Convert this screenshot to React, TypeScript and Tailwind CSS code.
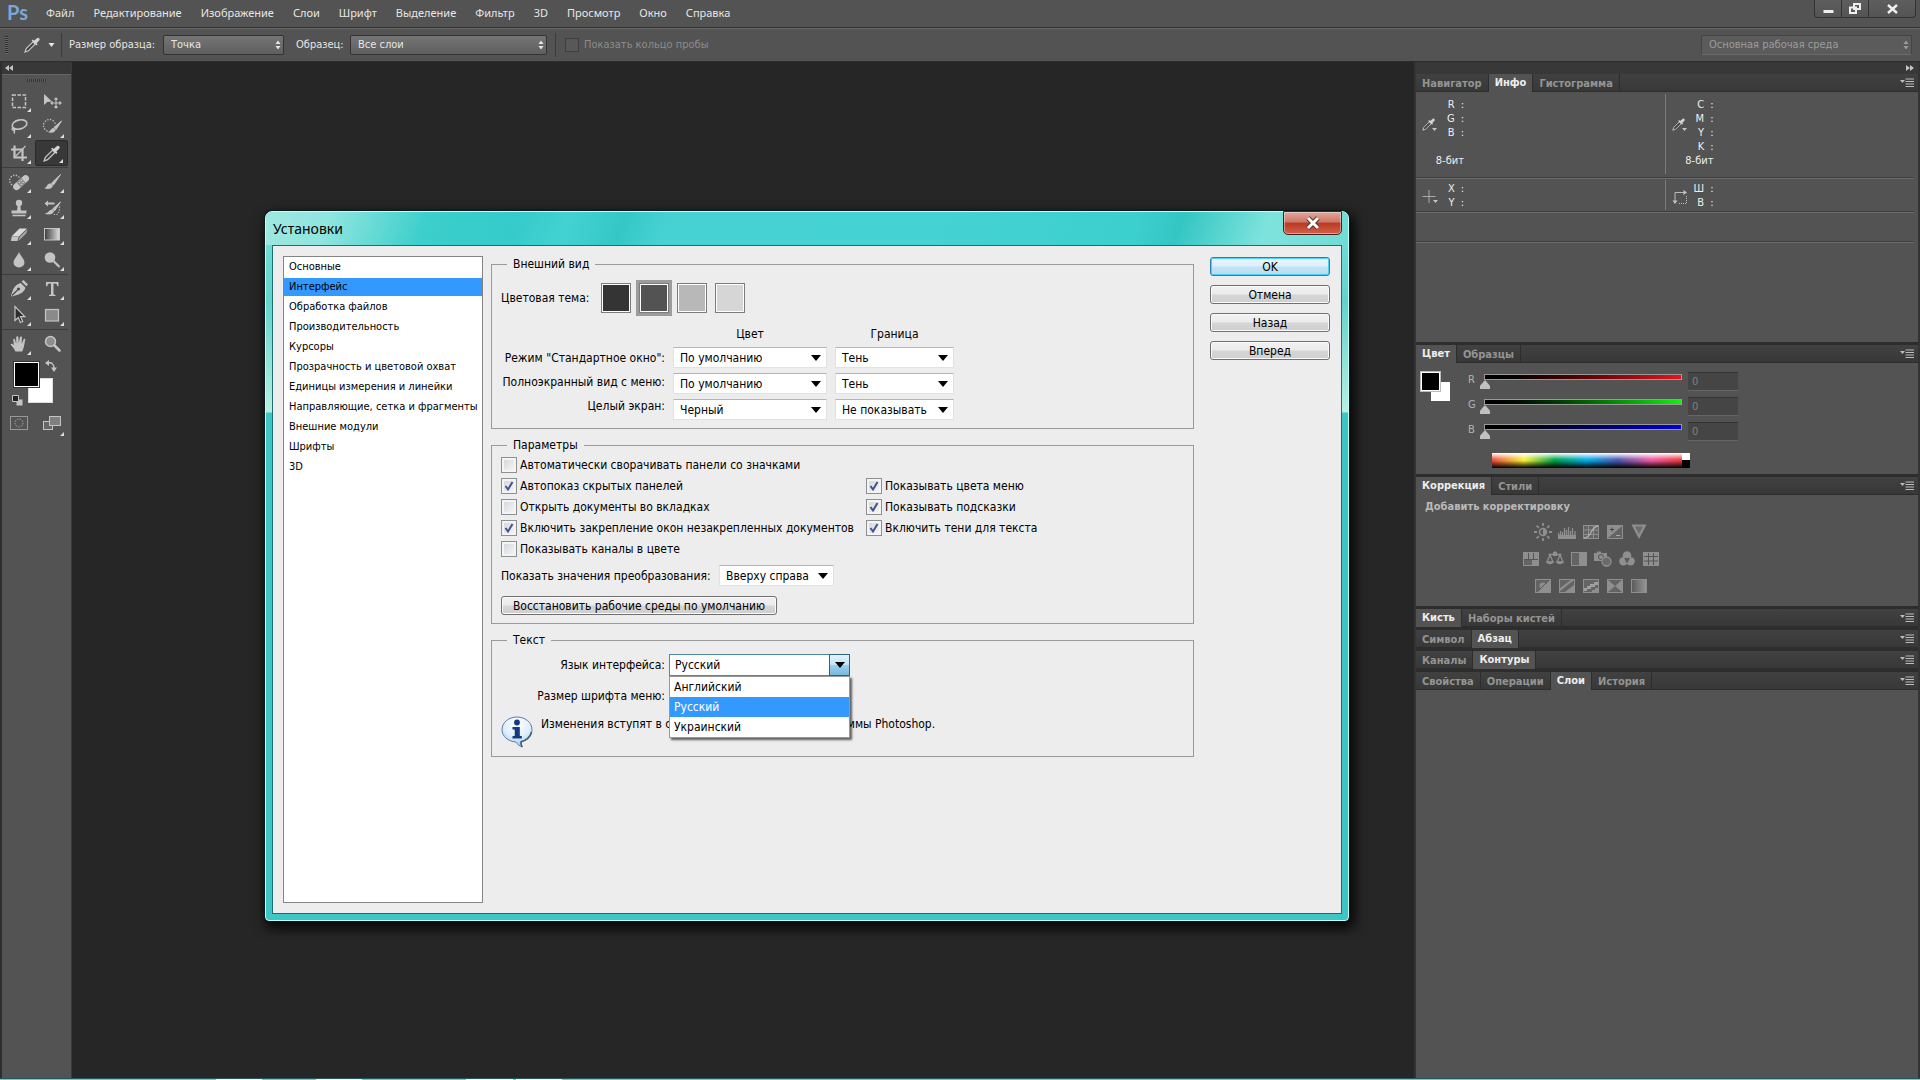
import React, { ReactNode } from 'react';

const MENU = ['Файл', 'Редактирование', 'Изображение', 'Слои', 'Шрифт', 'Выделение', 'Фильтр', '3D', 'Просмотр', 'Окно', 'Справка'];

const SECTIONS = [
  'Основные',
  'Интерфейс',
  'Обработка файлов',
  'Производительность',
  'Курсоры',
  'Прозрачность и цветовой охват',
  'Единицы измерения и линейки',
  'Направляющие, сетка и фрагменты',
  'Внешние модули',
  'Шрифты',
  '3D',
];

/* ---------- icons ---------- */

function Svg({ w = 20, h = 20, className, children }: { w?: number; h?: number; className?: string; children: ReactNode }) {
  return (
    <svg width={w} height={h} viewBox={`0 0 ${w} ${h}`} className={className} fill="none" stroke="none" aria-hidden="true">
      {children}
    </svg>
  );
}

const G = '#c4c4c4';

function Eyedropper({ size = 16 }: { size?: number }) {
  return (
    <svg width={size} height={size} viewBox="0 0 16 16" fill="none" aria-hidden="true">
      <path d="M9 4.8 2.2 11.6 1 15l3.4-1.2L11.2 7z" fill="#3f3f3f" stroke={G} strokeWidth="1.2" />
      <path d="m7.6 3.6 4.8 4.8 1.2-1.2-1-1 2.4-2.4c1-1 .8-1.9.2-2.6s-1.7-.8-2.6.2L10 3.8 8.9 2.6z" fill="#d4d4d4" />
    </svg>
  );
}

function BrushShape() {
  return (
    <>
      <path d="M18.5 2.5 9.5 11.2l1.9 1.9z" fill={G} stroke={G} strokeWidth="1" />
      <path d="M8.8 11.5c-2.2-.3-3.2.8-3.8 2.2-.5 1.2-1.4 2-3 2.3 3 1.7 8.2 1.3 9-2.5z" fill={G} />
    </>
  );
}

const TOOLS: { name: string; icon: ReactNode; plain?: boolean }[][] = [
  [
    { name: 'Прямоугольная область', icon: <Svg><rect x="3.5" y="4" width="13" height="12.5" stroke={G} strokeWidth="1.5" strokeDasharray="3.5 1.5" /></Svg> },
    {
      name: 'Перемещение',
      plain: true,
      icon: <Svg><path d="M2 3v11l3.2-3L10 10.5z" fill={G} /><path d="M14 7.5v9M9.5 12h9M12.5 8.5 14 7l1.5 1.5M12.5 15.5 14 17l1.5-1.5M10.5 10.5 9 12l1.5 1.5M17.5 10.5 19 12l-1.5 1.5" stroke={G} strokeWidth="1.1" /></Svg>,
    },
    { name: 'Лассо', icon: <Svg><ellipse cx="10.5" cy="7.5" rx="7.5" ry="4.5" transform="rotate(-14 10.5 7.5)" stroke={G} strokeWidth="1.6" /><path d="M4.5 10.5c-2 .5-2 3 .3 2.8 2-.2 1-2.3-.5-2 1 1.5 2.5 3 .5 5.2" stroke={G} strokeWidth="1.2" /></Svg> },
    { name: 'Быстрое выделение', icon: <Svg><circle cx="7.5" cy="8.5" r="6" stroke={G} strokeWidth="1.3" strokeDasharray="1.3 1.5" /><path d="M7 13h6l5-8" stroke="#535353" strokeWidth="5" /><path d="M19.5 4 12 10.5l2 2z" fill={G} stroke={G} /><path d="M11.5 11c-2.5 0-2.5 3.5-6 4 3 1.5 8 1 8-2.2z" fill={G} /></Svg> },
    { name: 'Рамка', icon: <Svg><path d="M5.5 2.5v12h12.5M2 6.5h11.5V18" stroke={G} strokeWidth="2.2" /><path d="m6.5 13.5 10-10.5" stroke={G} strokeWidth="1.1" /></Svg> },
    { name: 'Пипетка', icon: <Eyedropper size={17} /> },
  ],
  [
    { name: 'Восстанавливающая кисть', icon: <Svg><circle cx="6" cy="8.5" r="5.3" stroke={G} strokeWidth="1.3" strokeDasharray="1.3 1.5" /><g transform="rotate(-42 12 10.5)"><rect x="2.5" y="7.2" width="19" height="6.8" rx="3.4" fill={G} /><rect x="8.7" y="7.2" width="6.6" height="6.8" fill="#8a8a8a" /><path d="M10.5 9.2h1M13 9.2h1M10.5 12h1M13 12h1" stroke="#eee" /></g></Svg> },
    { name: 'Кисть', icon: <Svg><BrushShape /></Svg> },
    { name: 'Штамп', icon: <Svg><circle cx="10" cy="5" r="3.2" fill={G} /><path d="M8.8 7h2.4l.8 5.5h5.5v3h-15v-3H8z" fill={G} /><path d="M3.5 17.5h13" stroke={G} strokeWidth="1.6" /></Svg> },
    { name: 'Архивная кисть', icon: <Svg><path d="M2.5 5.5 6 2.5v2h6.5v2H6v2z" fill={G} /><path d="M18.5 4 10.5 11l2 2z" fill={G} stroke={G} /><path d="M10 11.5c-3 0-3 3.5-7.5 4 3 1.7 9 1.3 9.5-2.5z" fill={G} /><path d="M17.5 8.5v4.5l-2.5 3.5h-4" stroke={G} strokeWidth="1.2" strokeDasharray="1.2 1.5" /></Svg> },
    { name: 'Ластик', icon: <Svg><path d="m2.5 12.5 8-8h7.5l-8 8z" fill="#dadada" /><path d="M2.5 12.8h7.2L8.5 17H2z" fill={G} /><path d="m10.8 12.8 7.7-7.5-1.2 4L9.5 17z" fill="#aaa" /></Svg> },
    {
      name: 'Градиент',
      icon: (
        <Svg>
          <defs><linearGradient id="tool-gradient"><stop stopColor="#3c3c3c" /><stop offset="1" stopColor="#e0e0e0" /></linearGradient></defs>
          <rect x="2.5" y="4.5" width="15" height="11.5" fill="url(#tool-gradient)" stroke={G} />
        </Svg>
      ),
    },
    { name: 'Размытие', icon: <Svg><path d="M10 2c1 3.5 5.5 7 5.5 10.5a5.5 5 0 0 1-11 0C4.5 9 9 5.5 10 2z" fill={G} /></Svg> },
    { name: 'Осветлитель', icon: <Svg><circle cx="8" cy="7.5" r="5.3" fill={G} /><path d="m11.5 11 6 6" stroke={G} strokeWidth="2.2" /></Svg> },
  ],
  [
    { name: 'Перо', icon: <Svg><path d="m12.5 2.5 2-1.5 4.5 4.5-1.7 1.8z" fill={G} /><path d="m11.8 4 4.7 4.7c-1.5 4-4 6-9.5 7.5l-4 1.3-1-1 1.5-4C5 7.5 7.5 5.5 11.8 4z" fill={G} /><path d="m3 16.5 5.5-5.5" stroke="#444" strokeWidth="1.1" /><circle cx="9.5" cy="10" r="1.5" fill="#444" /></Svg> },
    { name: 'Текст', icon: <Svg><path d="M4 3h12.5v4.2h-1.2c-.3-2-1.1-2.7-2.8-2.7h-1v10c0 1 .5 1.3 2 1.5v1H7v-1c1.500-.2 2-.5 2-1.500v-10H8c-1.700 0-2.500.7-2.800 2.700H4z" fill={G} /></Svg> },
    { name: 'Выделение контура', icon: <Svg><path d="M6 1.5v14l3.2-3 2.2 5 2.3-1-2.2-4.8h4.3z" fill="#2c2c2c" stroke={G} strokeWidth="1.2" /></Svg> },
    { name: 'Прямоугольник', icon: <Svg><rect x="3.5" y="4.5" width="13" height="11.5" fill="#8a8a8a" stroke={G} strokeWidth="1.2" /></Svg> },
  ],
  [
    { name: 'Рука', icon: <Svg><path d="M6.5 17.5 4.5 14 1.5 10.5c.8-1.2 2-1 3.3.7L4.2 5c1.2-.8 1.7 0 2 1.2l1 3.5V3c.8-1 1.8-1 2.2 0l.4 6.3L11 3c.8-.8 1.8-.6 2 .4l-.3 6.5 2-5c.9-.5 1.7 0 1.5 1.1l-1.5 7.500-1.500 4z" fill={G} /></Svg> },
    { name: 'Масштаб', plain: true, icon: <Svg><circle cx="8.5" cy="7.5" r="5" fill="#8e8e8e" stroke={G} strokeWidth="1.5" /><path d="m12.5 11.5 5 5" stroke={G} strokeWidth="2.6" strokeLinecap="round" /></Svg> },
  ],
];

function Spin() {
  return (
    <svg width="6" height="9" viewBox="0 0 6 9" fill="currentColor" className="pointer-events-none absolute top-1/2 right-[3px] -translate-y-1/2" aria-hidden="true">
      <path d="M3 0 .5 3.5h5zM3 9 .5 5.5h5z" />
    </svg>
  );
}

/* ---------- top bars ---------- */

function BarSelect({ id, value, className }: { id: string; value: string; className: string }) {
  return (
    <span className={'relative flex h-5 ' + className}>
      <select id={id} className="w-full appearance-none rounded-xs border border-[#333] bg-linear-to-b from-[#757575] to-[#5f5f5f] px-[7px] outline-none">
        <option>{value}</option>
      </select>
      <Spin />
    </span>
  );
}

function WindowButtons() {
  return (
    <div className="mr-1 flex h-[18px] overflow-hidden rounded-b-sm border border-t-0 border-[#333] bg-linear-to-b from-[#5e5e5e] to-[#545454] text-[#eee]">
      <button aria-label="Свернуть" className="flex w-[27px] items-center justify-center border-r border-[#333]">
        <Svg w={11} h={10}><path d="M.5 6h10v3H.5z" fill="currentColor" /></Svg>
      </button>
      <button aria-label="Восстановить" className="flex w-[27px] items-center justify-center border-r border-[#333]">
        <Svg w={12} h={11}><path d="M5 1h6v5H5zM1 4.5h6V10H1z" stroke="currentColor" strokeWidth="2" fill="#5a5a5a" /></Svg>
      </button>
      <button aria-label="Закрыть" className="flex w-[46px] items-center justify-center">
        <Svg w={11} h={10}><path d="m1 1 9 8m0-8L1 9" stroke="currentColor" strokeWidth="2.4" /></Svg>
      </button>
    </div>
  );
}

function TopBars() {
  return (
    <header className="text-[#e6e6e6]">
      <div className="flex h-7 items-start border-b border-[#333]">
        <span className="ml-[7px] w-8 font-['Lato',sans-serif] text-[20px] leading-6 font-bold text-[#7ba7d6]">Ps</span>
        <nav className="flex grow gap-[19px] pt-[5px] pl-[7px] font-['Noto_Sans',sans-serif] leading-4">
          {MENU.map((m) => (
            <button key={m}>{m}</button>
          ))}
        </nav>
        <WindowButtons />
      </div>
      <div className="flex h-[33px] items-center border-t border-[#666] pr-2">
        <span className="ml-[5px] h-[18px] w-[3px] bg-[repeating-linear-gradient(#2e2e2e_0_1px,#666_1px_2px)]" />
        <button aria-label="Пипетка" className="ml-4 flex items-center gap-2">
          <Eyedropper />
          <Svg w={7} h={4}><path d="M.5 0h6L3.500 4z" fill="currentColor" /></Svg>
        </button>
        <span className="ml-[6px] h-6 w-px bg-[#3a3a3a]" />
        <label htmlFor="sample-size" className="ml-[7px] w-[94px]">Размер образца:</label>
        <BarSelect id="sample-size" value="Точка" className="w-[121px]" />
        <label htmlFor="sample" className="ml-3 w-[54px]">Образец:</label>
        <BarSelect id="sample" value="Все слои" className="w-[197px]" />
        <span className="ml-2 h-6 w-px bg-[#3a3a3a]" />
        <label className="ml-[9px] flex items-center gap-[5px] text-[#8c8c8c]">
          <input type="checkbox" className="size-[14px] appearance-none border border-[#3e3e3e] bg-[#585858]" />
          Показать кольцо пробы
        </label>
        <span className="grow" />
        <span className="relative flex h-5 w-[211px] text-[#9c9c9c]">
          <select aria-label="Рабочая среда" className="w-full appearance-none rounded-xs border border-[#444] border-b-[#6a6a6a] bg-[#5b5b5b] px-[7px] outline-none">
            <option>Основная рабочая среда</option>
          </select>
          <Spin />
        </span>
      </div>
    </header>
  );
}

/* ---------- toolbox ---------- */

function Toolbox() {
  return (
    <aside className="flex w-[72px] shrink-0 flex-col border-r border-l-2 border-r-[#3a3a3a] border-l-[#2e2e2e] bg-[#535353]">
      <div className="flex h-3 items-center bg-[#383838] pl-[3px]">
        <Svg w={8} h={6}><path d="M4 0v6L0 3zM8 0v6L4 3z" fill={G} /></Svg>
      </div>
      <div className="flex h-[14px] items-start justify-center border-t border-[#666] pt-1">
        <span className="h-[3px] w-5 bg-[repeating-linear-gradient(90deg,#333_0_1px,#5c5c5c_1px_2px)]" />
      </div>
      {TOOLS.map((group, i) => (
        <div key={i} className={i ? 'mr-[3px] mt-px grid grid-cols-2 border-t border-[#3c3c3c] pt-px' : 'mr-[3px] grid grid-cols-2'}>
          {group.map((t) => (
            <button
              key={t.name}
              aria-label={t.name}
              className={
                'relative flex h-[26px] items-center justify-center ' +
                (t.name === 'Пипетка' ? 'rounded-xs border border-[#2a2a2a] bg-[#383838]' : '')
              }
            >
              {t.icon}
              {!t.plain && (
                <Svg w={4} h={4} className="absolute right-1 bottom-[2px]"><path d="M4 0v4H0z" fill="#ddd" /></Svg>
              )}
            </button>
          ))}
        </div>
      ))}
      <div className="relative mx-[10px] mt-[3px] h-[46px]">
        <button aria-label="Цвет фона" className="absolute top-[18px] left-4 size-[25px] border border-[#ddd] bg-white" />
        <button aria-label="Основной цвет" className="absolute top-[2px] left-[2px] size-[25px] border border-white bg-black outline outline-[#333]" />
        <Svg w={12} h={12} className="absolute top-0 left-[33px]"><path d="M3 3c4-1 6 1 6 6" stroke={G} strokeWidth="1.3" /><path d="M4 0v6L0 3zM6 7.5h6L9 12z" fill={G} /></Svg>
        <Svg w={11} h={11} className="absolute top-[35px] left-0"><path d="M4.5 4.5h6v6h-6z" fill={G} /><path d="M.5.5h6v6h-6z" fill="#222" stroke={G} /></Svg>
      </div>
      <div className="mr-[3px] mt-1 grid grid-cols-2">
        <button aria-label="Быстрая маска" className="flex h-[26px] items-center justify-center">
          <Svg w={18} h={14}><rect x=".5" y=".5" width="17" height="13" stroke="#999" /><circle cx="9" cy="7" r="4" stroke="#aaa" strokeDasharray="1.5 1.2" /></Svg>
        </button>
        <button aria-label="Режим экрана" className="relative flex h-[26px] items-center justify-center">
          <Svg w={18} h={14}><rect x=".5" y="5.5" width="9" height="8" stroke={G} fill="#666" /><rect x="6.5" y=".5" width="11" height="9" stroke={G} fill="#808080" /></Svg>
          <Svg w={4} h={4} className="absolute right-1 bottom-0"><path d="M4 0v4H0z" fill="#ddd" /></Svg>
        </button>
      </div>
    </aside>
  );
}

/* ---------- right dock ---------- */

function Tabs({ names, active }: { names: string[]; active: string }) {
  return (
    <div className="flex h-[18px] border-b border-[#2d2d2d] bg-linear-to-b from-[#414141] to-[#383838] font-bold" role="tablist">
      {names.map((n) => (
        <button
          key={n}
          role="tab"
          aria-selected={n === active}
          className={
            n === active
              ? 'z-1 -mb-px border-r border-[#2d2d2d] bg-[#535353] px-[6px] pt-px text-[#ededed]'
              : 'border-r border-[#2d2d2d] px-[6px] pt-[2px] text-[#949494]'
          }
        >
          {n}
        </button>
      ))}
      <button aria-label="Меню панели" className="mr-1 ml-auto text-[#bdbdbd]">
        <Svg w={14} h={9}><path d="M0 2h5L2.5 5z" fill="currentColor" /><path d="M5.5 1H14M5.5 3.5H14M5.5 6H14M5.5 8.5H14" stroke="currentColor" /></Svg>
      </button>
    </div>
  );
}

function Readout({ icon, lines, note }: { icon: ReactNode; lines: string[]; note?: boolean }) {
  return (
    <div className="flex grow basis-0 gap-[2px] pl-[6px] leading-[14px] text-[#eee]">
      <span className="flex w-4 items-center">{icon}</span>
      <div className="flex w-6 flex-col items-end">
        {lines.map((l) => (
          <span key={l} className="flex h-[14px] gap-[6px] whitespace-pre">
            <span>{l}</span>
            {l !== ' ' && <span>:</span>}
          </span>
        ))}
        {note && <span className="whitespace-nowrap">8-бит</span>}
      </div>
    </div>
  );
}

function DropperMenu() {
  return (
    <span className="relative mb-7">
      <Eyedropper size={13} />
      <Svg w={5} h={3} className="absolute -right-[2px] bottom-0"><path d="M0 0h5L2.5 3z" fill={G} /></Svg>
    </span>
  );
}

function InfoPanel() {
  return (
    <section className="h-[250px]">
      <div className="mr-1 flex h-[87px] items-stretch border-b border-[#6c6c6c] pt-1.5 shadow-[inset_0_-1px_#3e3e3e]">
        <Readout icon={<DropperMenu />} lines={['R', 'G', 'B', ' ']} note />
        <span className="-mt-1 mb-1 w-px bg-[#7a7a7a]" />
        <Readout icon={<DropperMenu />} lines={['C', 'M', 'Y', 'K']} note />
      </div>
      <div className="mr-1 flex h-[34px] border-b border-[#6c6c6c] pt-[3px] shadow-[inset_0_-1px_#3e3e3e]">
        <Readout icon={<Svg w={16} h={16}><path d="M7 1v13M.5 7.5h13" stroke="#aaa" /><path d="M11 11h5l-2.5 3z" fill={G} /></Svg>} lines={['X', 'Y']} />
        <span className="-mt-[2px] mb-[2px] w-px bg-[#7a7a7a]" />
        <Readout icon={<Svg w={16} h={16}><path d="M3 12V3.5h9" stroke="#bbb" /><path d="M.5 11.5h5L3 15zM11.5 1v5L15 3.5z" fill={G} /><path d="M7 14.5h7.5V7" stroke="#bbb" strokeDasharray="1 1" /></Svg>} lines={['Ш', 'В']} />
      </div>
      <div className="mr-1 h-[30px] border-b border-[#6c6c6c] shadow-[inset_0_-1px_#3e3e3e]" />
    </section>
  );
}

const CHANNELS = [
  { name: 'R', bar: 'bg-linear-to-r from-black to-[#e8141c]' },
  { name: 'G', bar: 'bg-linear-to-r from-black to-[#14f014]' },
  { name: 'B', bar: 'bg-linear-to-r from-black to-[#0000d8]' },
];

function ColorPanel() {
  return (
    <section className="flex h-[111px] pt-2 pl-1">
      <div className="relative h-8 w-12">
        <button aria-label="Цвет фона" className="absolute top-[11px] left-[11px] size-[19px] bg-white" />
        <button aria-label="Основной цвет" className="absolute top-0 left-0 size-[21px] border border-[#bbb] bg-black outline -outline-offset-2 outline-white" />
      </div>
      <div className="w-[270px] text-[#b4b4b4]">
        {CHANNELS.map((c) => (
          <div key={c.name} className="flex h-[25px] items-start">
            <label htmlFor={'channel-' + c.name} className="mt-px w-4 leading-4">{c.name}</label>
            <div className="mt-[3px] w-[198px]">
              <div className={'h-[6px] border border-[#999] ' + c.bar} />
              <input
                id={'channel-' + c.name}
                type="range"
                min="0"
                max="255"
                defaultValue="0"
                className="-ml-1 block h-[9px] w-[206px] appearance-none bg-transparent [&::-webkit-slider-thumb]:h-[9px] [&::-webkit-slider-thumb]:w-[10px] [&::-webkit-slider-thumb]:appearance-none [&::-webkit-slider-thumb]:bg-[#c0c0c0] [&::-webkit-slider-thumb]:[clip-path:polygon(50%_0,100%_65%,100%_100%,0_100%,0_65%)]"
              />
            </div>
            <input aria-label={'Значение ' + c.name} defaultValue="0" className="mt-px ml-[6px] h-[19px] w-[50px] border-t border-b border-t-[#333] border-b-[#666] bg-[#454545] px-1 text-[#808080] outline-none" />
          </div>
        ))}
        <div className="mt-[7px] ml-6 flex h-[15px] w-[198px]">
          <div className="grow bg-[linear-gradient(#fff,#fff0_45%,#0000_50%,#000),linear-gradient(90deg,#ee4b3c,#f7f236_17%,#00a24a_33%,#00aeef_50%,#4b58b0_66%,#f05aa0_84%,#ee3a38)]" />
          <div className="w-2 bg-[linear-gradient(#fff_50%,#000_50%)]" />
        </div>
      </div>
    </section>
  );
}

const A = '#8f8f8f';
const Frame = ({ children }: { children?: ReactNode }) => (
  <Svg w={16} h={14}>
    <rect x=".5" y=".5" width="15" height="13" fill="#646464" stroke={A} />
    {children}
  </Svg>
);

const ADJUSTMENTS: ReactNode[][] = [
  [
    <Svg w={18} h={18}><circle cx="9" cy="9" r="3.5" stroke={A} strokeWidth="1.5" /><path d="M9 5.5a3.5 3.5 0 0 1 0 7z" fill={A} /><path d="M9 0v3M9 15v3M0 9h3M15 9h3M2.6 2.6l2.2 2.2M13.2 13.2l2.2 2.2M2.6 15.4l2.2-2.2M13.2 4.8l2.2-2.2" stroke={A} strokeWidth="1.8" /></Svg>,
    <Svg w={18} h={14}><path d="M.5 13V8M2.5 13V6M4.5 13V7M6.5 13V3M8.5 13V5M10.5 13V2M12.5 13V6M14.5 13V3M17 13V6" stroke={A} strokeWidth="1.3" /><path d="M0 10h18v4H0z" fill={A} /></Svg>,
    <Frame><path d="M1 5h14M1 9.5h14M5.5 1v12M10.5 1v12" stroke={A} /><path d="M1 13c8 0 6-11 14-12" stroke="#b0b0b0" strokeWidth="1.3" /></Frame>,
    <Frame><path d="M1 13V1h14z" fill={A} /><path d="M3 4.5h4M5 2.5v4" stroke="#444" /><path d="M9 10.5h4" stroke="#aaa" /></Frame>,
    <Svg w={16} h={16}><path d="M.5 .5h15L8 15z" fill={A} /><path d="M4 2.5h8L8 10z" fill="#6c6c6c" /></Svg>,
  ],
  [
    <Frame><path d="M1 1h14v6H1z" fill={A} /><path d="M5.5 1v6M10.5 1v6M1 7.5h14" stroke="#555" /><path d="M9 8h6v5H9z" fill={A} /></Frame>,
    <Svg w={18} h={15}><path d="M9 0v3M2.5 3.5h13M4 4 1 11h6zM14 4l-3 7h6z" stroke={A} strokeWidth="1.3" /><path d="M0 10.5h8c-1 3.5-7 3.5-8 0zM10 10.5h8c-1 3.5-7 3.5-8 0zM7 1h4v4H7z" fill={A} /></Svg>,
    <Frame><path d="M8 1h7v12H8z" fill={A} /></Frame>,
    <Svg w={18} h={16}><path d="M0 2h3V.5h4V2h6v8H0z" fill={A} /><circle cx="7" cy="6" r="2.5" stroke="#555" /><circle cx="12.5" cy="10.5" r="4.5" fill="#6a6a6a" stroke={A} strokeWidth="1.3" /></Svg>,
    <Svg w={16} h={15}><circle cx="8" cy="4.5" r="4.3" fill={A} /><circle cx="4.5" cy="10.3" r="4.3" fill={A} /><circle cx="11.5" cy="10.3" r="4.3" fill={A} /><path d="M8 12.5 5 7h6z" fill="#5a5a5a" /></Svg>,
    <Frame><path d="M1 1h14v12H1z" fill={A} /><path d="M1 4.5h14M1 9h14M5.5 1v12M10.5 1v12" stroke="#555" /></Frame>,
  ],
  [
    <Frame><path d="M15 1v12H3z" fill={A} /><circle cx="8" cy="7" r="3.5" fill={A} /><path d="m4 11 8-8" stroke="#555" /></Frame>,
    <Frame><path d="M1 9 12 1h3L1 12zM6 13l9-7v7z" fill={A} /></Frame>,
    <Frame><path d="M1 9h3V7h3V5h4V3h4v3h-3v2H8v2H4v2H1z" fill="#a0a0a0" /><path d="M9 13v-2h3V9h3v4z" fill={A} /></Frame>,
    <Frame><path d="m1 1 7 6 7-6v12L8 7l-7 6z" fill={A} /></Frame>,
    <Svg w={16} h={14}>
      <defs><linearGradient id="adj-gradient"><stop stopColor="#5a5a5a" /><stop offset="1" stopColor="#979797" /></linearGradient></defs>
      <rect x=".5" y=".5" width="15" height="13" fill="url(#adj-gradient)" stroke={A} />
    </Svg>,
  ],
];

function AdjustmentsPanel() {
  return (
    <section className="h-[111px] pt-1 pl-[9px]">
      <p className="leading-4 font-bold text-[#bababa]">Добавить корректировку</p>
      <div className="ml-[94px] flex w-36 flex-col items-center pt-[3px]">
        {ADJUSTMENTS.map((row, i) => (
          <div key={i} className="flex">
            {row.map((icon, j) => (
              <button key={j} aria-label={`Коррекция ${i + 1}.${j + 1}`} className="flex h-[27px] w-6 items-center justify-center">{icon}</button>
            ))}
          </div>
        ))}
      </div>
    </section>
  );
}

function Dock() {
  return (
    <aside className="flex w-[506px] shrink-0 flex-col gap-[3px] border-r-2 border-l-2 border-[#333] bg-[#2d2d2d] *:bg-[#535353]">
      <div>
        <div className="flex h-3 items-center justify-end bg-[#383838] pr-1">
          <Svg w={8} h={6}><path d="M0 0v6l4-3zM4 0v6l4-3z" fill={G} /></Svg>
        </div>
        <Tabs names={['Навигатор', 'Инфо', 'Гистограмма']} active="Инфо" />
        <InfoPanel />
      </div>
      <div>
        <Tabs names={['Цвет', 'Образцы']} active="Цвет" />
        <ColorPanel />
      </div>
      <div>
        <Tabs names={['Коррекция', 'Стили']} active="Коррекция" />
        <AdjustmentsPanel />
      </div>
      <div><Tabs names={['Кисть', 'Наборы кистей']} active="Кисть" /></div>
      <div><Tabs names={['Символ', 'Абзац']} active="Абзац" /></div>
      <div><Tabs names={['Каналы', 'Контуры']} active="Контуры" /></div>
      <div className="grow">
        <Tabs names={['Свойства', 'Операции', 'Слои', 'История']} active="Слои" />
      </div>
    </aside>
  );
}

/* ---------- preferences window ---------- */

function Group({ title, children }: { title: string; children: ReactNode }) {
  return (
    <fieldset className="min-w-0 border border-[#9a9a9a] px-[9px] pb-2">
      <legend className="ml-[6px] px-[6px] leading-4">{title}</legend>
      {children}
    </fieldset>
  );
}

function Select({ id, label, value, className }: { id?: string; label?: string; value: string; className: string }) {
  return (
    <span className={'relative flex h-[21px] ' + className}>
      <select id={id} aria-label={label} className="w-full appearance-none border border-[#e2e2e2] border-t-[#b4b4b4] bg-white px-[6px] outline-none">
        <option>{value}</option>
      </select>
      <svg width="10" height="6" viewBox="0 0 10 6" className="pointer-events-none absolute top-2 right-[6px]" aria-hidden="true"><path d="M0 0h10L5 6z" /></svg>
    </span>
  );
}

function Check({ label, on, className }: { label: string; on?: boolean; className?: string }) {
  return (
    <label className={'flex h-[21px] items-center gap-[3px] whitespace-nowrap ' + (className ?? '')}>
      <span className="relative flex">
        <input type="checkbox" defaultChecked={on} className="peer size-4 appearance-none border border-[#8e8f8f] bg-linear-to-br from-[#cfd3d8] to-[#fafafa] shadow-[inset_0_0_0_2px_#f4f4f4]" />
        <svg width="16" height="16" viewBox="0 0 16 16" fill="none" className="pointer-events-none absolute hidden peer-checked:block" aria-hidden="true">
          <path d="m4.5 8 2.5 3.5L11.5 4" stroke="#44538f" strokeWidth="2" />
        </svg>
      </span>
      {label}
    </label>
  );
}

const THEMES = ['bg-[#343434]', 'bg-[#535353]', 'bg-[#b8b8b8]', 'bg-[#d6d6d6]'];
const BUTTON = 'h-[19px] rounded-[3px] border border-[#707070] bg-[linear-gradient(#f2f2f2,#ebebeb_48%,#d6d6d6_52%,#cfcfcf)] leading-4 shadow-[inset_0_0_0_1px_#fafafa]';

function Appearance() {
  return (
    <Group title="Внешний вид">
      <div className="flex items-center pt-2">
        <span className="w-[97px]">Цветовая тема:</span>
        <div className="flex gap-[2px]">
          {THEMES.map((t, i) => (
            <button
              key={t}
              aria-label={`Тема ${i + 1}`}
              className={'flex size-9 items-center justify-center ' + (i === 1 ? 'border-3 border-[#9c9c9c]' : '')}
            >
              <span className={'size-[30px] border border-[#7c7c7c] shadow-[inset_0_0_0_1px_#fff] ' + t} />
            </button>
          ))}
        </div>
      </div>
      <div className="flex gap-2 pt-[10px]">
        <div className="flex w-[164px] flex-col items-end pt-5 leading-6 whitespace-nowrap">
          <label htmlFor="std">Режим "Стандартное окно":</label>
          <label htmlFor="full-menu">Полноэкранный вид с меню:</label>
          <label htmlFor="full">Целый экран:</label>
        </div>
        <div className="flex flex-col gap-[5px]">
          <span className="text-center leading-4">Цвет</span>
          <Select id="std" value="По умолчанию" className="w-[154px]" />
          <Select id="full-menu" value="По умолчанию" className="w-[154px]" />
          <Select id="full" value="Черный" className="w-[154px]" />
        </div>
        <div className="flex flex-col gap-[5px]">
          <span className="text-center leading-4">Граница</span>
          <Select label="Граница: стандартное окно" value="Тень" className="w-[119px]" />
          <Select label="Граница: полноэкранный вид с меню" value="Тень" className="w-[119px]" />
          <Select label="Граница: целый экран" value="Не показывать" className="w-[119px]" />
        </div>
      </div>
    </Group>
  );
}

function Options() {
  return (
    <Group title="Параметры">
      <div className="grid grid-cols-[365px_1fr] pt-px">
        <Check label="Автоматически сворачивать панели со значками" className="col-span-2" />
        <Check label="Автопоказ скрытых панелей" on />
        <Check label="Показывать цвета меню" on />
        <Check label="Открыть документы во вкладках" />
        <Check label="Показывать подсказки" on />
        <Check label="Включить закрепление окон незакрепленных документов" on />
        <Check label="Включить тени для текста" on />
        <Check label="Показывать каналы в цвете" />
      </div>
      <div className="mt-[6px] flex items-center">
        <label htmlFor="transform" className="w-[218px]">Показать значения преобразования:</label>
        <Select id="transform" value="Вверху справа" className="w-[115px]" />
      </div>
      <button className={BUTTON + ' mt-[10px] block w-[276px]'}>Восстановить рабочие среды по умолчанию</button>
    </Group>
  );
}

function TextGroup() {
  return (
    <Group title="Текст">
      <div className="flex items-center gap-1 pt-[6px]">
        <label htmlFor="lang" className="w-[164px] text-right">Язык интерфейса:</label>
        <div className="relative w-[181px]">
          <select id="lang" defaultValue="Русский" className="block h-[22px] w-full appearance-none border border-[#4f86ac] bg-white px-[5px] outline-none">
            <option>Английский</option>
            <option>Русский</option>
            <option>Украинский</option>
          </select>
          <span className="pointer-events-none absolute top-0 right-0 flex h-[22px] w-[21px] items-center justify-center border border-[#2c628b] bg-[linear-gradient(#e3f4fc,#c4e5f6_48%,#98d1ef_52%,#78b8dc)]">
            <svg width="10" height="6" viewBox="0 0 10 6" aria-hidden="true"><path d="M0 0h10L5 6z" /></svg>
          </span>
          <ul role="listbox" aria-label="Язык интерфейса" className="absolute top-full left-0 z-10 w-full border border-[#999] bg-white leading-5 shadow-[2px_2px_2px_#0009]">
            <li role="option" aria-selected="false" className="px-[4px]">Английский</li>
            <li role="option" aria-selected="true" className="bg-[#3399ff] px-[4px] text-white">Русский</li>
            <li role="option" aria-selected="false" className="px-[4px]">Украинский</li>
          </ul>
        </div>
      </div>
      <p className="mt-[9px] w-[164px] text-right leading-[22px]">Размер шрифта меню:</p>
      <div className="mt-[9px] flex gap-2">
        <svg width="32" height="32" viewBox="0 0 32 32" aria-hidden="true">
          <defs>
            <radialGradient id="bubble" cx=".5" cy=".25" r=".8"><stop stopColor="#fff" /><stop offset=".55" stopColor="#dfeefb" /><stop offset="1" stopColor="#8fbde8" /></radialGradient>
          </defs>
          <path d="M16 1c8.500 0 15 5.600 15 12.700 0 6-4.500 10.600-10.500 12-.5 2 .2 4 .8 5.300-3-1-5.300-3-6.300-5C7.300 25.500 1 20.500 1 13.700 1 6.600 7.500 1 16 1z" fill="url(#bubble)" stroke="#5b7ea8" />
          <path d="M30.500 16c-1 5-5.500 8.800-10.500 9.700-.4 2 .3 4 1 5.300" fill="none" stroke="#3e5c85" strokeWidth="1.500" />
          <circle cx="16" cy="6.500" r="2.900" fill="#123a80" />
          <path d="M11.500 11h7.300v9h2v2.500h-9.300V20h2.200v-6.500h-2.200z" fill="#123a80" />
        </svg>
        <p className="leading-4 whitespace-nowrap">Изменения вступят в силу после перезапуска программы Photoshop.</p>
      </div>
    </Group>
  );
}

function Preferences() {
  return (
    <section
      role="dialog"
      aria-label="Установки"
      className="absolute top-[211px] left-[265px] w-[1084px] rounded-t-[7px] rounded-b-[4px] border border-[#c8fbf5] bg-[linear-gradient(#6fdcd6_30px,#62d3cc_90px,#b8efe2_200px,#3cc6c6_201px)] px-[6px] pb-[6px] text-[12px] text-black shadow-[0_0_0_1px_#0a1a1a,3px_5px_12px_3px_#000c]"
    >
      <header className="-mx-[6px] flex h-[33px] items-start justify-between rounded-t-[6px] bg-[linear-gradient(110deg,#9ee8e0_0,#8fe5df_6%,#3ccfcb_15%,#34cbca_23%,#43d2d1_28%,#34c7c6_33%,#47d2d2_37%,#45d2d2_62%,#3bcfcd_80%,#34c6c3_84%,#7fe3dc_92%,#6fdcd5_100%)] pr-[6px] pl-[7px]">
        <h1 className="pt-[7px] font-['Noto_Sans',sans-serif] text-[14px] leading-5">Установки</h1>
        <button aria-label="Закрыть" className="-mt-px flex h-6 w-[59px] items-center justify-center rounded-b-[5px] border border-[#4a1f1c] bg-[linear-gradient(#e0a79b,#cf7767_46%,#b83a22_50%,#d5604a)] shadow-[inset_0_0_0_1px_#fff6]">
          <Svg w={16} h={14}><path d="m3 2 10 10M13 2 3 12" stroke="#60302c" strokeWidth="5" /><path d="m3 2 10 10M13 2 3 12" stroke="#fff" strokeWidth="3" /></Svg>
        </button>
      </header>
      <div className="flex border border-[#1f6d6d] bg-[#ededed] pt-[10px] pr-[11px] pb-[10px] pl-[10px]">
        <ul className="h-[647px] w-[200px] border border-[#848484] bg-white text-[11px] leading-[18px]">
          {SECTIONS.map((s) => (
            <li key={s} className="py-px">
              <button className={'block w-full px-[5px] text-left whitespace-nowrap ' + (s === 'Интерфейс' ? 'bg-[#3399ff]' : '')}>{s}</button>
            </li>
          ))}
        </ul>
        <div className="ml-2 flex grow flex-col gap-2">
          <Appearance />
          <Options />
          <TextGroup />
        </div>
        <div className="mt-px ml-4 flex w-[120px] flex-col gap-[9px]">
          <button className="h-[19px] rounded-[3px] border border-[#2f7fb0] bg-[linear-gradient(#e9f6fd,#dceffb_48%,#c4e4f6_52%,#b4dcf2)] leading-4 shadow-[inset_0_0_0_1px_#4fd0f6]">OK</button>
          <button className={BUTTON}>Отмена</button>
          <button className={BUTTON}>Назад</button>
          <button className={BUTTON}>Вперед</button>
        </div>
      </div>
    </section>
  );
}

export default function App() {
  return (
    <div className="relative flex h-screen min-w-[1360px] flex-col overflow-hidden bg-[#535353] font-['DejaVu_Sans_Condensed','DejaVu_Sans',sans-serif] text-[11px]">
      <TopBars />
      <main className="flex min-h-0 grow border-t border-[#2d2d2d]">
        <Toolbox />
        <div className="grow bg-[#262626]" />
        <Dock />
      </main>
      <footer className="relative flex h-[2px] items-end border-t border-[#205a5a] bg-[#7cc4c0]">
        <span className="ml-[216px] h-px w-[46px] bg-white" />
        <span className="ml-[54px] h-px w-[46px] bg-white" />
        <span className="ml-[104px] h-px w-[47px] bg-white" />
        <span className="ml-[3px] h-px w-[46px] bg-white" />
      </footer>
      <Preferences />
    </div>
  );
}
